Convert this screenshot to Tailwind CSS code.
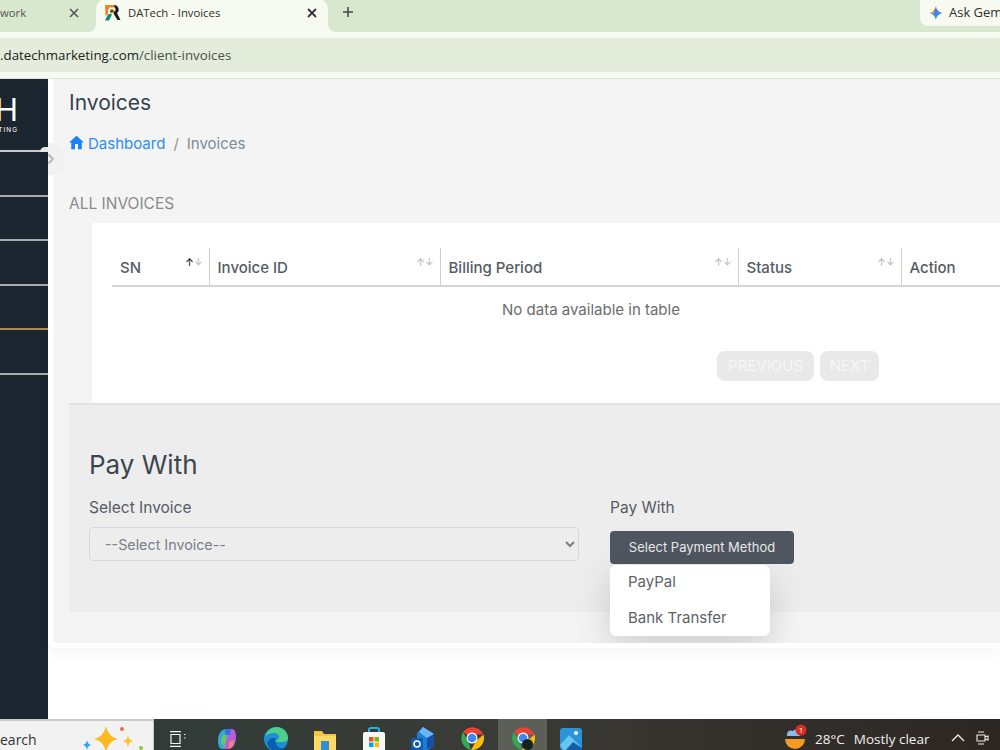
<!DOCTYPE html>
<html lang="en">
  <head>
    <meta charset="UTF-8" />
    <meta name="viewport" content="width=device-width, initial-scale=1.0" />
    <title>DATech - Invoices</title>
    <script src="https://cdn.jsdelivr.net/npm/@tailwindcss/browser@4"></script>
  </head>
  <body class="w-[1000px] h-[750px] overflow-hidden bg-white flex flex-col font-['Inter','Liberation_Sans',sans-serif]">
    <!-- Browser tabs -->
    <div class="h-[32px] shrink-0 bg-[#d7e8ce] flex items-start font-['Open_Sans',sans-serif] text-[11.300px] text-[#2b2f2b]">
      <div class="w-[96px] h-[26px] flex items-center justify-between pr-[16px] text-[#555]">
        <span>work</span>
        <svg class="w-[12px] h-[12px]" viewBox="0 0 12 12" fill="none" stroke="#555" stroke-width="1.600"><path d="M2 2l8 8M10 2l-8 8" /></svg>
      </div>
      <div class="relative w-[232px] h-[33px] bg-[#f7faf1] rounded-t-[10px] flex items-center pl-[8px] pr-[10px] -mt-[1px]">
        <div class="absolute -left-[8px] bottom-0 w-[8px] h-[8px] bg-[#f7faf1]"><div class="w-full h-full bg-[#d7e8ce] rounded-br-[8px]"></div></div>
        <div class="absolute -right-[8px] bottom-0 w-[8px] h-[8px] bg-[#f7faf1]"><div class="w-full h-full bg-[#d7e8ce] rounded-bl-[8px]"></div></div>
        <svg class="w-[17px] h-[17px] shrink-0 mb-[6px]" viewBox="0 0 17 17">
          <path d="M1 1h9v2.500H5.500L4 6v4L1.500 12z" fill="#f58220" />
          <path d="M10 1a4.500 4.500 0 0 1 3 8l3.500 7h-3L9.500 9.500 10 7.500a2.200 2.200 0 0 0 .5-4z" fill="#1b1b1b" />
          <path d="M6 5.500h4V9H6z" fill="#f58220" />
          <circle cx="7.800" cy="7" r="1.200" fill="#333" />
          <path d="M1 16.500l3-6 3-1 1 1-3 6z" fill="#0b8f70" />
        </svg>
        <span class="ml-[7px] mb-[4px] flex-1">DATech - Invoices</span>
        <svg class="w-[12px] h-[12px] mb-[6px]" viewBox="0 0 12 12" fill="none" stroke="#333" stroke-width="1.800"><path d="M2 2l8 8M10 2l-8 8" /></svg>
      </div>
      <svg class="w-[14px] h-[14px] ml-[13px] mt-[5px]" viewBox="0 0 14 14" fill="none" stroke="#444" stroke-width="1.500"><path d="M7 2v10M2 7h10" /></svg>
      <div class="ml-auto w-[80px] h-[26px] bg-[#f7faf1] rounded-bl-[8px] flex items-center pl-[9px] gap-[6px] text-[13px] whitespace-nowrap overflow-hidden">
        <svg class="w-[14px] h-[14px] shrink-0" viewBox="0 0 14 14">
          <path d="M7 0C7.500 4 10 6.500 14 7 10 7.500 7.500 10 7 14 6.500 10 4 7.500 0 7 4 6.500 6.500 4 7 0z" fill="#4285f4" />
          <path d="M7 0C6.800 2 6 3.500 4.500 4.500L7 5z" fill="#ea4335" />
          <path d="M0 7c2-.2 3.500-.9 4.500-2.500L5 7z" fill="#fbbc04" />
          <path d="M7 14C6.800 12 6 10.500 4.500 9.500L7 9z" fill="#34a853" />
        </svg>
        <span>Ask Gemini</span>
      </div>
    </div>
    <!-- Address bar -->
    <div class="h-[47px] shrink-0 bg-[#f7faf1] border-b border-[#e0e2dc] pt-[6px]">
      <div class="h-[34px] pt-[1px] bg-[#e4ecdc] flex items-center font-['Open_Sans',sans-serif] text-[13.300px] text-[#20241f]">
        .datechmarketing.com<span class="text-[#4d524b]">/client-invoices</span>
      </div>
    </div>

    <div class="flex flex-1 min-h-0 relative">
      <!-- Sidebar -->
      <div class="w-[48px] shrink-0 bg-[#1c2630] text-white overflow-hidden">
        <div class="h-[73.400px] border-b-2 border-[#c9c9c9] pt-[15px] relative">
          <div class="flex justify-end pr-[30px] text-[31px] leading-[31px]">H</div>
          <div class="flex justify-end pr-[30px] text-[6.500px] leading-[8px] tracking-[1px] mt-[1px]">TING</div>
          <div class="absolute right-0 -bottom-[2px] w-[8px] h-[5px] bg-[#e8e8e8] rounded-tl-[5px]"></div>
        </div>
        <div class="h-[44.500px] border-b-2 border-[#a9acaf]"></div>
        <div class="h-[44.500px] border-b-2 border-[#a9acaf]"></div>
        <div class="h-[44.500px] border-b-2 border-[#a9acaf]"></div>
        <div class="h-[44.500px] border-b-2 border-[#b08a54]"></div>
        <div class="h-[44.500px] border-b-2 border-[#a9acaf]"></div>
      </div>
      <!-- sidebar toggle -->
      <div class="absolute z-10 left-[48px] top-[64px] w-[17px] h-[32px] rounded-r-full bg-[#f0f1f0] flex items-center">
        <svg class="ml-[-1px] w-[8px] h-[12px]" viewBox="0 0 8 12" fill="none" stroke="#b3b7b8" stroke-width="1.800"><path d="M1.500 1.500L6 6l-4.500 4.500" /></svg>
      </div>

      <!-- Content -->
      <div class="flex-1 min-w-0 self-start h-[569px] bg-[#f4f4f4] border-l-[5px] border-b-[5px] border-white rounded-bl-[8px] shadow-[0_8px_14px_rgba(0,0,0,0.035)] overflow-hidden flex flex-col">
        <div class="pl-[16px]">
          <h1 class="text-[21px] leading-[28px] mt-[10px] text-[#36434f]">Invoices</h1>
          <div class="flex items-center text-[15px] mt-[15px] h-[24px]">
            <svg class="w-[15px] h-[15px] mb-[3px]" viewBox="2 3 20 18" fill="#1a82f7"><path d="M10 21v-7h4v7h5v-9h3L12 3 2 12h3v9z" /></svg>
            <span class="ml-[4px] text-[#2f8df5]">Dashboard</span>
            <span class="mx-[8px] text-[#8b939b]">/</span>
            <span class="text-[#7f8b96]">Invoices</span>
          </div>
          <div class="mt-[36px] text-[15.500px] leading-[24px] text-[#8a8a8a]">ALL INVOICES</div>
        </div>

        <!-- Table card -->
        <div class="ml-[39px] mt-[7px] h-[180px] shrink-0 bg-white pl-[20px] pt-[25px]">
          <table class="w-[958px] table-fixed border-collapse text-[15px] text-[#555c63]">
            <thead>
              <tr class="h-[38px] border-b-2 border-[#d5d5d5]">
                <th class="w-[97px] border-r border-[#cfcfcf] pl-[8px] pr-[6px] font-medium text-left">
                  <div class="flex justify-between"><span class="pt-[4px]">SN</span><span class="text-[10px] leading-[12px] pt-[3px]"><span class="text-[#222]">↑</span><span class="text-[#bbb]">↓</span></span></div>
                </th>
                <th class="w-[231px] border-r border-[#cfcfcf] pl-[8px] pr-[6px] font-medium text-left">
                  <div class="flex justify-between"><span class="pt-[4px]">Invoice ID</span><span class="text-[10px] leading-[12px] pt-[3px] text-[#bbb]">↑↓</span></div>
                </th>
                <th class="w-[298px] border-r border-[#cfcfcf] pl-[8px] pr-[6px] font-medium text-left">
                  <div class="flex justify-between"><span class="pt-[4px]">Billing Period</span><span class="text-[10px] leading-[12px] pt-[3px] text-[#bbb]">↑↓</span></div>
                </th>
                <th class="w-[163px] border-r border-[#cfcfcf] pl-[8px] pr-[6px] font-medium text-left">
                  <div class="flex justify-between"><span class="pt-[4px]">Status</span><span class="text-[10px] leading-[12px] pt-[3px] text-[#bbb]">↑↓</span></div>
                </th>
                <th class="pl-[8px] font-medium text-left"><div class="pt-[4px]">Action</div></th>
              </tr>
            </thead>
            <tbody>
              <tr class="h-[44px]"><td colspan="5" class="pt-[4px] text-center text-[#6d6d6d] font-normal">No data available in table</td></tr>
            </tbody>
          </table>
          <div class="flex gap-[6px] ml-[605px] mt-[21px] text-[15px] text-[#f6f6f6]">
            <div class="w-[97px] h-[30px] rounded-[8px] bg-[#e9e9e9] flex items-center justify-center">PREVIOUS</div>
            <div class="w-[59px] h-[30px] rounded-[8px] bg-[#e9e9e9] flex items-center justify-center">NEXT</div>
          </div>
        </div>

        <!-- Pay panel -->
        <div class="ml-[16px] h-[209px] shrink-0 bg-[#ededed] border-t-2 border-[#e2e2e2] pl-[20px] rounded-b-[3px]">
          <h2 class="mt-[43px] text-[26px] leading-[34px] text-[#3b4650]">Pay With</h2>
          <div class="flex gap-[31px] mt-[15px] text-[15.500px] text-[#555c63]">
            <div class="w-[490px]">
              <div class="leading-[22px]">Select Invoice</div>
              <select class="mt-[8px] w-full h-[34px] border border-[#d4d7de] rounded-[4px] pl-[11px] pr-[4px] text-[14.300px] text-[#7b8087]">
                <option>--Select Invoice--</option>
              </select>
            </div>
            <div class="relative">
              <div class="leading-[22px]">Pay With</div>
              <div class="mt-[12px] w-[184px] h-[33px] bg-[#50565f] rounded-[4px] flex items-center justify-center text-[13px] text-[#e6e8ea]">Select Payment Method</div>
              <div class="absolute left-0 top-[68px] w-[160px] h-[71px] bg-white rounded-[6px] shadow-[0_12px_36px_rgba(0,0,0,0.16)] pl-[18px] pt-[6px] text-[15px] text-[#5d6268]">
                <div class="h-[36px] leading-[21px]">PayPal</div>
                <div class="leading-[21px]">Bank Transfer</div>
              </div>
            </div>
          </div>
        </div>
      </div>
    </div>

    <!-- Windows taskbar -->
    <div class="h-[31px] shrink-0 flex bg-gradient-to-r from-[#2b3b38] via-[#3a3b36] to-[#2c2622] font-['Open_Sans',sans-serif] text-[13.500px] text-[#f1f1f1]">
      <div class="w-[154px] h-full shrink-0 bg-[#f2f2f2] border-t-2 border-r border-[#c9c9c9] text-[14px] text-[#333] pt-[9px] leading-[20px] relative overflow-hidden">
        earch
        <svg class="absolute left-[82px] top-[5px] w-[70px] h-[30px]" viewBox="0 0 70 30">
          <path d="M24 0c2 8 5 11 12 13-7 2-10 5-12 13-2-8-5-11-12-13 7-2 10-5 12-13z" fill="#fdb91f" />
          <path d="M46 9c1 4 2 5 5 6-3 1-4 2-5 6-1-4-2-5-5-6 3-1 4-2 5-6z" fill="#fdc233" />
          <circle cx="40" cy="3" r="2" fill="#ee6a3b" />
          <circle cx="59" cy="22" r="2" fill="#8cc63f" />
          <path d="M5 14c.6 3 1.500 4 4 5-2.500 1-3.400 2-4 5-.6-3-1.500-4-4-5 2.500-1 3.400-2 4-5z" fill="#2ea6ee" />
        </svg>
      </div>
      <!-- pinned apps -->
      <div class="w-[48px] shrink-0 flex justify-center pt-[12px]">
        <svg class="w-[16px] h-[16px]" viewBox="0 0 16 16" fill="none" stroke="#f2f2f2" stroke-width="1.200"><path d="M0 .6h11M0 15.400h11M1 3.500h9v9H1zM14 3.500h1.500M14 7h1.500" /></svg>
      </div>
      <div class="w-[50px] shrink-0 flex justify-center pt-[8px]">
        <svg class="w-[24px] h-[24px]" viewBox="0 0 24 24">
          <path d="M3 14C3 7 6 2 11 2h4l-5 20H7c-3 0-4-4-4-8z" fill="#2fa8dc" />
          <path d="M6 16c0-5 2-9 5-11l2 6-3 10z" fill="#63c76a" />
          <path d="M21 10c0 7-3 12-8 12H9l5-20h3c3 0 4 4 4 8z" fill="#b65fd6" />
          <path d="M14 22c3-1 5-5 5-9l-5 2z" fill="#f2866a" />
          <path d="M10 2h6l-1 6h-5z" fill="#3a6ee8" />
        </svg>
      </div>
      <div class="w-[48px] shrink-0 flex justify-center pt-[8px]">
        <svg class="w-[24px] h-[24px]" viewBox="0 0 24 24">
          <circle cx="12" cy="12" r="12" fill="#1b8fd6" />
          <path d="M1 10C3 3 8 0 13 0c6 0 11 5 11 11 0 3-3 4-6 4h-6c0-3 3-3 3-5 0-2-2-4-5-4-4 0-7 1-9 4z" fill="#4fd08a" />
          <path d="M12 15c0 4 3 6 6 6 2 0 3-1 4-2-2 3-5 5-9 5-5 0-9-3-10-8 1-3 4-5 7-5 1 0 2 .5 2 1-1 1-1 2-1 3z" fill="#0c5fae" />
        </svg>
      </div>
      <div class="w-[50px] shrink-0 flex justify-center pt-[9px]">
        <svg class="w-[24px] h-[22px]" viewBox="0 0 24 22">
          <path d="M1 3h8l2 3h12v16H1z" fill="#f7c23c" />
          <path d="M1 8h22v14H1z" fill="#ffd963" />
          <path d="M8 13h8v9H8z" fill="#2f8fd8" />
        </svg>
      </div>
      <div class="w-[48px] shrink-0 flex justify-center pt-[8px]">
        <svg class="w-[24px] h-[26px]" viewBox="0 0 24 26">
          <path d="M7 6V3a2 2 0 0 1 2-2h6a2 2 0 0 1 2 2v3" fill="none" stroke="#27b0e6" stroke-width="2" />
          <rect x="1" y="5" width="22" height="21" rx="2" fill="#f7f7f7" />
          <rect x="7" y="10" width="4.500" height="4.500" fill="#f25022" />
          <rect x="12.500" y="10" width="4.500" height="4.500" fill="#7fba00" />
          <rect x="7" y="15.500" width="4.500" height="4.500" fill="#00a4ef" />
          <rect x="12.500" y="15.500" width="4.500" height="4.500" fill="#ffb900" />
        </svg>
      </div>
      <div class="w-[49px] shrink-0 flex justify-center pt-[8px]">
        <svg class="w-[24px] h-[26px]" viewBox="0 0 24 26">
          <path d="M12 0l11 7v12L12 26 6 22V6z" fill="#1c7cd6" />
          <path d="M12 0l11 7-6 5L8 5z" fill="#6bb5f5" />
          <path d="M16 11l7-4v12l-7 3z" fill="#1450a3" />
          <rect x="0" y="11" width="12" height="12" rx="2" fill="#0f5cb5" />
          <circle cx="6" cy="17" r="3" fill="none" stroke="#fff" stroke-width="1.500" />
        </svg>
      </div>
      <div class="w-[49px] shrink-0 flex justify-center pt-[7px]">
        <svg class="w-[24px] h-[24px]" viewBox="0 0 24 24">
          <path d="M12 12L3 6a12 12 0 0 1 20.500 2.500H12z" fill="#ea4335" />
          <path d="M23.500 8.500A12 12 0 0 1 11 24l5-9z" fill="#fbbc04" />
          <path d="M11 24A12 12 0 0 1 3 6l5 9z" fill="#34a853" />
          <circle cx="12" cy="12" r="5.500" fill="#fff" />
          <circle cx="12" cy="12" r="4.300" fill="#4285f4" />
        </svg>
      </div>
      <div class="w-[49px] shrink-0 h-full bg-[#5c5e58] flex justify-center pt-[7px] relative ml-[2px]">
        <svg class="w-[24px] h-[24px]" viewBox="0 0 24 24">
          <path d="M12 12L3 6a12 12 0 0 1 20.500 2.500H12z" fill="#ea4335" />
          <path d="M23.500 8.500A12 12 0 0 1 11 24l5-9z" fill="#fbbc04" />
          <path d="M11 24A12 12 0 0 1 3 6l5 9z" fill="#34a853" />
          <circle cx="12" cy="12" r="5.500" fill="#fff" />
          <circle cx="12" cy="12" r="4.300" fill="#4285f4" />
        </svg>
        <div class="absolute left-[24px] top-[20px] w-[11px] h-[11px] rounded-full bg-[#15211d]"></div>
      </div>
      <div class="w-[47px] shrink-0 flex justify-center pt-[9px]">
        <svg class="w-[22px] h-[22px]" viewBox="0 0 22 22">
          <rect width="22" height="22" rx="3" fill="#2a93dc" />
          <circle cx="16" cy="5" r="2" fill="#fff" />
          <path d="M0 17l9-10 7 7 6 6v2H3z" fill="#63c7ef" />
          <path d="M6 22l7-8 9 6v2z" fill="#155ba8" />
        </svg>
      </div>
      <!-- weather and tray -->
      <div class="ml-[189px] w-[24px] shrink-0 pt-[5px]">
        <svg class="w-[24px] h-[26px]" viewBox="0 0 24 26">
          <path d="M2 15h20a10 10 0 0 1-20 0z" fill="#f59a23" />
          <path d="M4 10a4 4 0 0 1 6-3 4 4 0 0 1 7 3v2H4a3 3 0 0 1 0-2z" fill="#8db9e8" />
          <circle cx="18" cy="6" r="5.500" fill="#d92d27" />
          <text x="18" y="9" font-size="8" fill="#fff" text-anchor="middle">1</text>
        </svg>
      </div>
      <div class="ml-[8px] shrink-0 pt-[10px] leading-[20px] whitespace-nowrap">28°C</div>
      <div class="ml-[9px] shrink-0 pt-[10px] leading-[20px] whitespace-nowrap">Mostly clear</div>
      <svg class="ml-[22px] mt-[14px] w-[14px] h-[9px] shrink-0" viewBox="0 0 14 9" fill="none" stroke="#eee" stroke-width="1.300"><path d="M1 8l6-6 6 6" /></svg>
      <svg class="ml-[11px] mt-[12px] w-[13px] h-[14px] shrink-0" viewBox="0 0 13 14" fill="none" stroke="#eee" stroke-width="1.100"><path d="M2 1h6M2 13h6M1 4h8v6H1zM9 6l3-1v4l-3-1" /></svg>
    </div>
  </body>
</html>
